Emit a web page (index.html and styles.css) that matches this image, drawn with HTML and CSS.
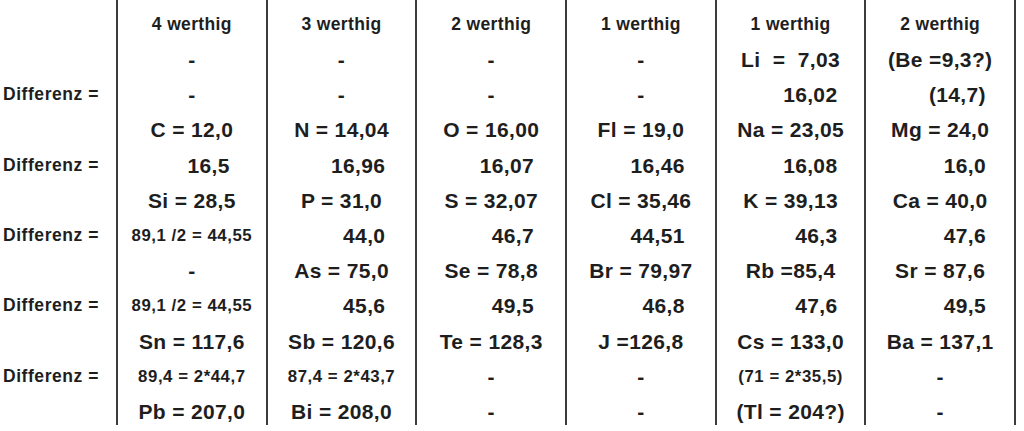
FILE: index.html
```html
<!DOCTYPE html>
<html>
<head>
<meta charset="utf-8">
<link rel="stylesheet" href="styles.css">
</head>
<body>
<div class="sheet">
  <div class="lab top"></div>
  <div class="cell h top">4 werthig</div>
  <div class="cell h top">3 werthig</div>
  <div class="cell h top">2 werthig</div>
  <div class="cell h top">1 werthig</div>
  <div class="cell h top">1 werthig</div>
  <div class="cell h top end">2 werthig</div>

  <div class="lab"></div>
  <div class="cell c">-</div>
  <div class="cell c">-</div>
  <div class="cell c">-</div>
  <div class="cell c">-</div>
  <div class="cell c pre">Li  =  7,03</div>
  <div class="cell c end">(Be =9,3?)</div>

  <div class="lab">Differenz =</div>
  <div class="cell c">-</div>
  <div class="cell c">-</div>
  <div class="cell c">-</div>
  <div class="cell c">-</div>
  <div class="cell d k5">16,02</div>
  <div class="cell d k6 end">(14,7)</div>

  <div class="lab"></div>
  <div class="cell c">C = 12,0</div>
  <div class="cell c">N = 14,04</div>
  <div class="cell c">O = 16,00</div>
  <div class="cell c">Fl = 19,0</div>
  <div class="cell c">Na = 23,05</div>
  <div class="cell c end">Mg = 24,0</div>

  <div class="lab">Differenz =</div>
  <div class="cell d k1">16,5</div>
  <div class="cell d k2">16,96</div>
  <div class="cell d k3">16,07</div>
  <div class="cell d k4">16,46</div>
  <div class="cell d k5">16,08</div>
  <div class="cell d k6 end">16,0</div>

  <div class="lab"></div>
  <div class="cell c">Si = 28,5</div>
  <div class="cell c">P = 31,0</div>
  <div class="cell c">S = 32,07</div>
  <div class="cell c">Cl = 35,46</div>
  <div class="cell c">K = 39,13</div>
  <div class="cell c end">Ca = 40,0</div>

  <div class="lab">Differenz =</div>
  <div class="cell s">89,1 /2 = 44,55</div>
  <div class="cell d k2">44,0</div>
  <div class="cell d k3">46,7</div>
  <div class="cell d k4">44,51</div>
  <div class="cell d k5">46,3</div>
  <div class="cell d k6 end">47,6</div>

  <div class="lab"></div>
  <div class="cell c">-</div>
  <div class="cell c">As = 75,0</div>
  <div class="cell c">Se = 78,8</div>
  <div class="cell c">Br = 79,97</div>
  <div class="cell c">Rb =85,4</div>
  <div class="cell c end">Sr = 87,6</div>

  <div class="lab">Differenz =</div>
  <div class="cell s">89,1 /2 = 44,55</div>
  <div class="cell d k2">45,6</div>
  <div class="cell d k3">49,5</div>
  <div class="cell d k4">46,8</div>
  <div class="cell d k5">47,6</div>
  <div class="cell d k6 end">49,5</div>

  <div class="lab"></div>
  <div class="cell c">Sn = 117,6</div>
  <div class="cell c">Sb = 120,6</div>
  <div class="cell c">Te = 128,3</div>
  <div class="cell c">J =126,8</div>
  <div class="cell c">Cs = 133,0</div>
  <div class="cell c end">Ba = 137,1</div>

  <div class="lab">Differenz =</div>
  <div class="cell s">89,4 = 2*44,7</div>
  <div class="cell s">87,4 = 2*43,7</div>
  <div class="cell c">-</div>
  <div class="cell c">-</div>
  <div class="cell s">(71 = 2*35,5)</div>
  <div class="cell c end">-</div>

  <div class="lab"></div>
  <div class="cell c">Pb = 207,0</div>
  <div class="cell c">Bi = 208,0</div>
  <div class="cell c">-</div>
  <div class="cell c">-</div>
  <div class="cell c">(Tl = 204?)</div>
  <div class="cell c end">-</div>
</div>
</body>
</html>
```

FILE: styles.css
```css
html, body {
  margin: 0;
  padding: 0;
  background: #ffffff;
}

body {
  font-family: "Liberation Sans", Arial, sans-serif;
  font-weight: bold;
  color: #1e1e1e;
}

.sheet {
  display: grid;
  grid-template-columns: 116px repeat(5, 149.7px) 151.5px;
  grid-template-rows: 42px repeat(10, 35.2px) 31.4px;
  width: 1016px;
}

.lab {
  padding-left: 3px;
  font-size: 17.5px;
  letter-spacing: 0.55px;
  line-height: 35.2px;
  white-space: nowrap;
}

.cell {
  box-sizing: border-box;
  border-left: 2px solid #3c3c3c;
  line-height: 35.2px;
  white-space: nowrap;
  overflow: visible;
}

.cell.end {
  border-right: 2px solid #3c3c3c;
}

.top {
  padding-top: 7px;
}

.h {
  text-align: center;
  font-size: 17.5px;
  letter-spacing: 0.35px;
}

.c {
  text-align: center;
  font-size: 21px;
  letter-spacing: 0.35px;
}

.pre {
  white-space: pre;
}

.d {
  text-align: right;
  font-size: 21px;
  letter-spacing: 0.35px;
  padding-right: 30px;
}

.d.k1 { padding-right: 36px; }
.d.k2 { padding-right: 30px; }
.d.k3 { padding-right: 31px; }
.d.k4 { padding-right: 30px; }
.d.k5 { padding-right: 27px; }
.d.k6 { padding-right: 28px; }

.s {
  text-align: center;
  font-size: 16.8px;
  letter-spacing: 0.55px;
}
```
